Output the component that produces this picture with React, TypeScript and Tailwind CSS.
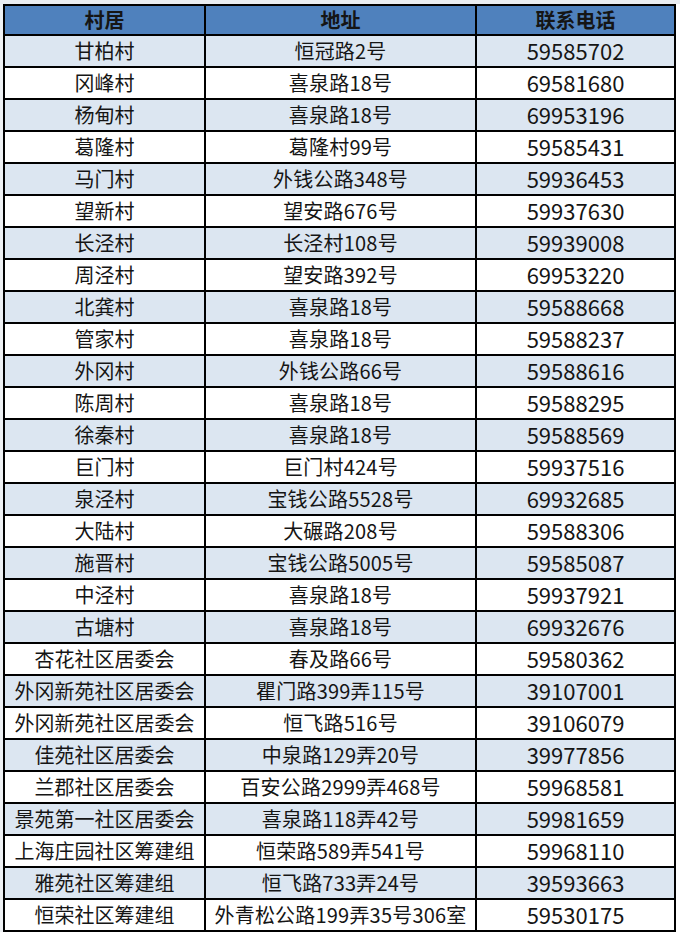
import React from "react";

const rows: [string, string, string][] = [
  ["甘柏村", "恒冠路2号", "59585702"],
  ["冈峰村", "喜泉路18号", "69581680"],
  ["杨甸村", "喜泉路18号", "69953196"],
  ["葛隆村", "葛隆村99号", "59585431"],
  ["马门村", "外钱公路348号", "59936453"],
  ["望新村", "望安路676号", "59937630"],
  ["长泾村", "长泾村108号", "59939008"],
  ["周泾村", "望安路392号", "69953220"],
  ["北龚村", "喜泉路18号", "59588668"],
  ["管家村", "喜泉路18号", "59588237"],
  ["外冈村", "外钱公路66号", "59588616"],
  ["陈周村", "喜泉路18号", "59588295"],
  ["徐秦村", "喜泉路18号", "59588569"],
  ["巨门村", "巨门村424号", "59937516"],
  ["泉泾村", "宝钱公路5528号", "69932685"],
  ["大陆村", "大碾路208号", "59588306"],
  ["施晋村", "宝钱公路5005号", "59585087"],
  ["中泾村", "喜泉路18号", "59937921"],
  ["古塘村", "喜泉路18号", "69932676"],
  ["杏花社区居委会", "春及路66号", "59580362"],
  ["外冈新苑社区居委会", "瞿门路399弄115号", "39107001"],
  ["外冈新苑社区居委会", "恒飞路516号", "39106079"],
  ["佳苑社区居委会", "中泉路129弄20号", "39977856"],
  ["兰郡社区居委会", "百安公路2999弄468号", "59968581"],
  ["景苑第一社区居委会", "喜泉路118弄42号", "59981659"],
  ["上海庄园社区筹建组", "恒荣路589弄541号", "59968110"],
  ["雅苑社区筹建组", "恒飞路733弄24号", "39593663"],
  ["恒荣社区筹建组", "外青松公路199弄35号306室", "59530175"],
];

export default function App() {
  return (
    <div
      className="w-[680px] h-[938px] bg-white text-[#151515]"
      style={{ fontFamily: '"Noto Sans CJK SC", "Noto Sans", sans-serif' }}
    >
      <div className="h-[4px] bg-[#e9edf2]" />
      <div className="flex">
        <div className="w-[3px] bg-[#eef1f4]" />
        <div className="w-[673px] border-2 border-black">
          <div className="grid grid-cols-[201px_271px_197px] h-[30px] border-b-2 border-black bg-[#4f81bd] text-[20px] font-bold leading-none">
            <div className="flex items-center justify-center border-r-2 border-black">村居</div>
            <div className="flex items-center justify-center border-r-2 border-black">地址</div>
            <div className="flex items-center justify-center">联系电话</div>
          </div>
          {rows.map((r, i) => (
            <div
              key={i}
              className={
                "grid grid-cols-[201px_271px_197px] h-[32px] border-b-2 border-black last:h-[30px] last:border-b-0 text-[20px] leading-none " +
                (i % 2 === 0 ? "bg-[#dce6f1]" : "bg-white")
              }
            >
              <div className="flex items-center justify-center border-r-2 border-black whitespace-nowrap">{r[0]}</div>
              <div className="flex items-center justify-center border-r-2 border-black whitespace-nowrap tracking-[0.2px]">{r[1]}</div>
              <div className="flex items-center justify-center pb-[2px] text-[22px]">{r[2]}</div>
            </div>
          ))}
        </div>
      </div>
    </div>
  );
}
